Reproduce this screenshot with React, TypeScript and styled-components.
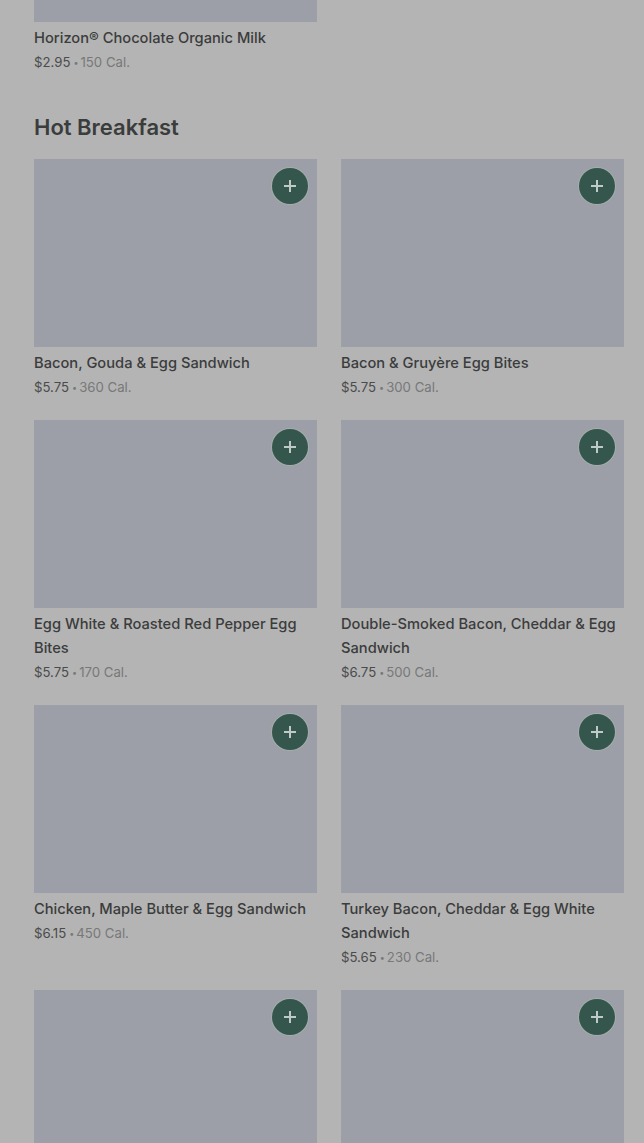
import styled, { createGlobalStyle } from "styled-components";

type Item = {
  name: string;
  price: string;
  cal: string;
};

const hotBreakfast: Item[] = [
  { name: "Bacon, Gouda & Egg Sandwich", price: "$5.75", cal: "360 Cal." },
  { name: "Bacon & Gruyère Egg Bites", price: "$5.75", cal: "300 Cal." },
  { name: "Egg White & Roasted Red Pepper Egg Bites", price: "$5.75", cal: "170 Cal." },
  { name: "Double-Smoked Bacon, Cheddar & Egg Sandwich", price: "$6.75", cal: "500 Cal." },
  { name: "Chicken, Maple Butter & Egg Sandwich", price: "$6.15", cal: "450 Cal." },
  { name: "Turkey Bacon, Cheddar & Egg White Sandwich", price: "$5.65", cal: "230 Cal." },
];

const PlusIcon = () => (
  <svg width="14" height="14" viewBox="0 0 14 14">
    <path d="M7 1v12M1 7h12" stroke="#bfc9c5" strokeWidth="2" fill="none" />
  </svg>
);

const ItemInfo = ({ item }: { item: Item }) => (
  <>
    <Name>{item.name}</Name>
    <Meta>
      <Price>{item.price}</Price>
      <Dot>•</Dot>
      {item.cal}
    </Meta>
  </>
);

const ItemPhoto = () => (
  <Photo>
    <AddButton aria-label="Add to order">
      <PlusIcon />
    </AddButton>
  </Photo>
);

const App = () => {
  return (
    <>
      <GlobalStyle />
      <Page>
        <Grid>
          <Card>
            <CutPhoto />
            <ItemInfo item={{ name: "Horizon® Chocolate Organic Milk", price: "$2.95", cal: "150 Cal." }} />
          </Card>
        </Grid>

        <Heading>Hot Breakfast</Heading>
        <Grid>
          {hotBreakfast.map((item) => (
            <Card key={item.name}>
              <ItemPhoto />
              <ItemInfo item={item} />
            </Card>
          ))}
          <Card>
            <ItemPhoto />
          </Card>
          <Card>
            <ItemPhoto />
          </Card>
        </Grid>
      </Page>
    </>
  );
};

export default App;

const GlobalStyle = createGlobalStyle`
  html, body {
    margin: 0;
    padding: 0;
    height: 1143px;
    overflow: hidden;
    background: #b4b4b4;
  }
`;

const Page = styled.div`
  height: 1143px;
  overflow: hidden;
  padding: 0 20px 0 34px;
  background: #b4b4b4;
  font-family: Inter, "Liberation Sans", sans-serif;
  color: #3b3c3c;
`;

const Grid = styled.div`
  display: grid;
  grid-template-columns: 283px 283px;
  column-gap: 24px;
  row-gap: 21px;
`;

const Card = styled.div`
  min-width: 0;
`;

const Photo = styled.div`
  position: relative;
  height: 188px;
  background: #9c9fa7;
`;

const CutPhoto = styled(Photo)`
  height: 22px;
`;

const AddButton = styled.button`
  position: absolute;
  top: 9px;
  right: 9px;
  width: 36px;
  height: 36px;
  padding: 0;
  border: none;
  border-radius: 50%;
  background: #35564c;
  box-shadow: 0 0 0 1px #a4aeab;
  display: flex;
  align-items: center;
  justify-content: center;
`;

const Name = styled.div`
  margin-top: 4px;
  font-size: 14.7px;
  line-height: 24px;
  font-weight: 500;
  color: #3b3c3c;
`;

const Meta = styled.div`
  height: 24px;
  font-size: 13.2px;
  line-height: 24px;
  color: #777878;
`;

const Price = styled.span`
  color: #4a4b4b;
`;

const Dot = styled.span`
  display: inline-block;
  margin: 0 2px 0 3px;
  font-size: 9px;
  line-height: 1;
  vertical-align: 1px;
`;

const Heading = styled.h2`
  margin: 37px 0 16px;
  font-size: 22px;
  line-height: 32px;
  font-weight: 600;
  color: #3b3c3c;
`;
